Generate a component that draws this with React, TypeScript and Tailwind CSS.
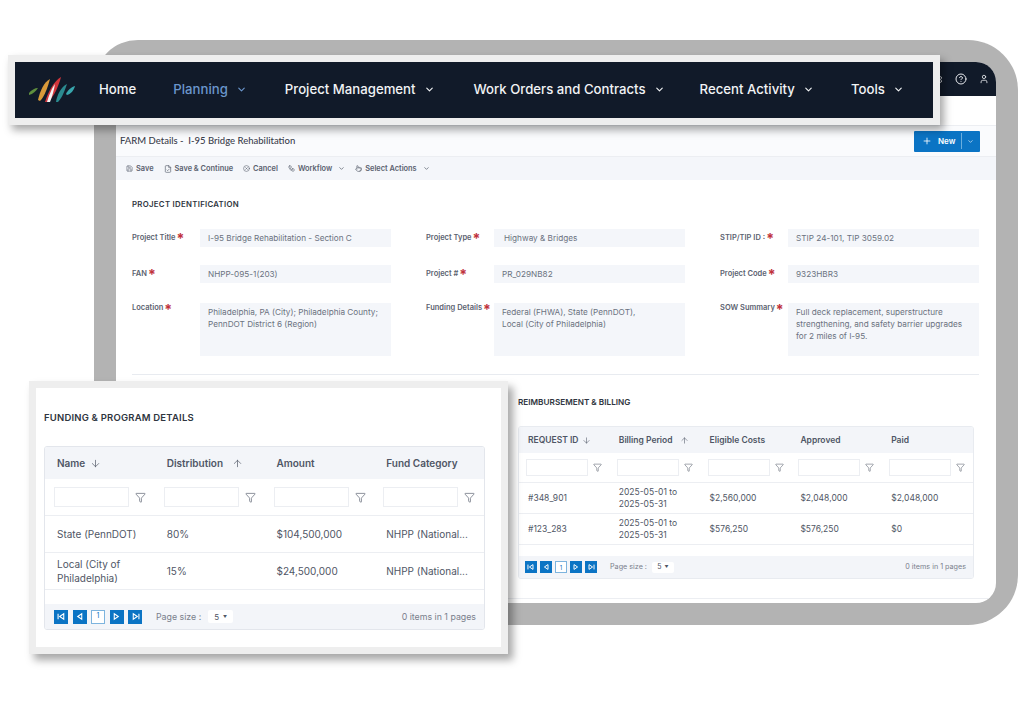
import { ArrowDown, ArrowUp, ChevronDown, CircleHelp, CircleX, FileCheck, Filter, Plus, Pointer, Save, Settings, User, Workflow } from "lucide-react"

const navItems = [
    { label: "Home", active: false, caret: false, gap: "mr-[37px]" },
    { label: "Planning", active: true, caret: true, gap: "mr-[38px]" },
    { label: "Project Management", active: false, caret: true, gap: "mr-[39px]" },
    { label: "Work Orders and Contracts", active: false, caret: true, gap: "mr-[35px]" },
    { label: "Recent Activity", active: false, caret: true, gap: "mr-[37px]" },
    { label: "Tools", active: false, caret: true, gap: "" },
]

const Logo = () => (
    <svg width="48" height="28" viewBox="0 0 48 28" className="shrink-0">
        <path d="M1 17 C3 14 7 12 10 12 C8 15 5 18 1 19 Z" fill="#5f8f3e" />
        <path d="M10 24 C12 15 16 6 22 3 C20 10 17 20 12 25 Z" fill="#d99a3a" />
        <path d="M17 26 C20 16 26 5 33 1 C31 9 26 21 20 26 Z" fill="#d2353c" />
        <path d="M19 26 C21 19 24 12 27 8 C26 14 24 21 22 26 Z" fill="#f4f4f4" />
        <path d="M28 26 C29 19 33 11 39 8 C37 14 34 22 30 26 Z" fill="#2b8a8f" />
        <path d="M38 18 C39 15 43 11 47 10 C46 14 43 18 39 19 Z" fill="#38a6ad" />
    </svg>
)

const NavBar = () => (
    <div className="absolute left-[8px] top-[55px] z-20 w-[932px] h-[70px] border-[7px] border-[#eeeeee] bg-[#111a29] shadow-[4px_5px_8px_rgba(0,0,0,0.35)] flex items-center pl-[13px]">
        <div className="mr-[23px]"><Logo /></div>
        {navItems.map((item) => (
            <div key={item.label} className={`flex items-center whitespace-nowrap text-[13.2px] font-medium ${item.gap} ${item.active ? "text-[#6b96cc]" : "text-[#f1f3f5]"}`}>
                <span>{item.label}</span>
                {item.caret && <ChevronDown size={11} strokeWidth={2.5} className="ml-[8px]" />}
            </div>
        ))}
    </div>
)

const ToolButton = ({ icon, label, caret }: { icon: React.ReactNode; label: string; caret?: boolean }) => (
    <div className="flex items-center gap-[3px] text-[7.4px] font-semibold text-[#5b6270] whitespace-nowrap">
        {icon}
        <span>{label}</span>
        {caret && <ChevronDown size={7} strokeWidth={2.5} className="ml-[3px]" />}
    </div>
)

const Label = ({ text, tall }: { text: string; tall?: boolean }) => (
    <div className={`w-[68px] shrink-0 flex items-center gap-[1px] text-[7.5px] font-semibold text-[#5b6270] whitespace-nowrap ${tall ? "h-[10px]" : "h-[17px]"}`}>
        {text}
        <span className="text-[#c0323c] text-[14px] leading-none font-bold mt-[3px]">*</span>
    </div>
)

const Field = ({ label, lines, tall, inset }: { label: string; lines: string[]; tall?: boolean; inset?: boolean }) => (
    <div className="flex items-start">
        <Label text={label} tall={tall} />
        <div className={`w-[191px] bg-[#f4f6fa] text-[8.2px] text-[#6b7280] leading-[12px] ${inset ? "pl-[10px]" : "pl-[8px]"} ${tall ? "h-[53px] py-[3px]" : "h-[18px] py-[3px]"}`}>
            {lines.map((line) => (
                <div key={line} className="whitespace-nowrap">{line}</div>
            ))}
        </div>
    </div>
)

const TriIcon = ({ kind, size }: { kind: "first" | "prev" | "next" | "last"; size: number }) => {
    const left = kind === "first" || kind === "prev"
    return (
        <svg width={size} height={size} viewBox="0 0 10 10" fill="none" stroke="white" strokeWidth="1.2">
            <path d={left ? "M7.5 2 L3 5 L7.5 8 Z" : "M2.5 2 L7 5 L2.5 8 Z"} />
            {kind === "first" && <path d="M1.2 2 V8" />}
            {kind === "last" && <path d="M8.8 2 V8" />}
        </svg>
    )
}

const Pager = ({ big }: { big?: boolean }) => {
    const box = big ? "size-[14px]" : "size-[12px]"
    const gap = big ? "gap-[4.5px]" : "gap-[3px]"
    const icon = big ? 9 : 8
    return (
        <div className={`flex items-center ${gap}`}>
            <div className={`${box} bg-[#0b74c4] flex items-center justify-center`}><TriIcon kind="first" size={icon} /></div>
            <div className={`${box} bg-[#0b74c4] flex items-center justify-center`}><TriIcon kind="prev" size={icon} /></div>
            <div className={`${box} border border-[#7db4de] bg-white text-[#0b74c4] flex items-center justify-center ${big ? "text-[7px]" : "text-[6px]"}`}>1</div>
            <div className={`${box} bg-[#0b74c4] flex items-center justify-center`}><TriIcon kind="next" size={icon} /></div>
            <div className={`${box} bg-[#0b74c4] flex items-center justify-center`}><TriIcon kind="last" size={icon} /></div>
        </div>
    )
}

const SortIcon = ({ dir, size, gap }: { dir?: "up" | "down"; size: number; gap: string }) => {
    if (dir === "down") return <ArrowDown size={size} strokeWidth={1.5} className={gap} />
    if (dir === "up") return <ArrowUp size={size} strokeWidth={1.5} className={gap} />
    return null
}

type Col = { name: string; sort?: "up" | "down"; sortGap: string }

const BillingTable = () => {
    const cols: Col[] = [
        { name: "REQUEST ID", sort: "down", sortGap: "ml-[4px]" },
        { name: "Billing Period", sort: "up", sortGap: "ml-[7px]" },
        { name: "Eligible Costs", sortGap: "" },
        { name: "Approved", sortGap: "" },
        { name: "Paid", sortGap: "" },
    ]
    const rows = [
        ["#348_901", "2025-05-01 to\n2025-05-31", "$2,560,000", "$2,048,000", "$2,048,000"],
        ["#123_283", "2025-05-01 to\n2025-05-31", "$576,250", "$576,250", "$0"],
    ]
    return (
        <div className="w-[456px] ml-[402px] border border-[#e8ebf0] rounded-[3px] overflow-hidden">
            <div className="grid grid-cols-5 h-[26px] bg-[#f3f5f9] items-center">
                {cols.map((c) => (
                    <div key={c.name} className="pl-[9px] flex items-center text-[8.5px] font-semibold text-[#4f5665]">
                        {c.name}
                        <SortIcon dir={c.sort} size={9} gap={c.sortGap} />
                    </div>
                ))}
            </div>
            <div className="grid grid-cols-5 h-[30px] items-center border-b border-[#eceef2]">
                {cols.map((c) => (
                    <div key={c.name} className="pl-[7px] flex items-center gap-[4px]">
                        <div className="w-[62px] h-[17px] border border-[#eceef2] bg-white" />
                        <Filter size={9} strokeWidth={1.5} className="text-[#5b6270] ml-[1px]" />
                    </div>
                ))}
            </div>
            {rows.map((row) => (
                <div key={row[0]} className="grid grid-cols-5 h-[31px] items-center border-b border-[#eceef2]">
                    {row.map((cell, i) => (
                        <div key={i} className="pl-[9px] text-[8.5px] leading-[12px] text-[#4f5665] whitespace-pre-line">{cell}</div>
                    ))}
                </div>
            ))}
            <div className="h-[11px]" />
            <div className="h-[22px] bg-[#f3f5f9] flex items-center pl-[6px] pr-[7px]">
                <Pager />
                <span className="ml-[13px] text-[7.2px] text-[#7a808c]">Page size :</span>
                <div className="ml-[5px] h-[11px] w-[22px] bg-white rounded-[2px] flex items-center justify-center gap-[3px] text-[7px] text-[#4f5665]">
                    5 <span className="text-[4px]">▼</span>
                </div>
                <span className="ml-auto text-[7.2px] text-[#7a808c]">0 items in 1 pages</span>
            </div>
        </div>
    )
}

const FundingCard = () => {
    const cols: Col[] = [
        { name: "Name", sort: "down", sortGap: "ml-[5px]" },
        { name: "Distribution", sort: "up", sortGap: "ml-[9px]" },
        { name: "Amount", sortGap: "" },
        { name: "Fund Category", sortGap: "" },
    ]
    const rows = [
        ["State (PennDOT)", "80%", "$104,500,000", "NHPP (National..."],
        ["Local (City of\nPhiladelphia)", "15%", "$24,500,000", "NHPP (National..."],
    ]
    return (
        <div className="absolute left-[29px] top-[381px] z-10 w-[479px] h-[273px] border-[7px] border-[#eeeeee] bg-white shadow-[5px_6px_8px_rgba(0,0,0,0.35)] pl-[8px] pt-[23px]">
            <h2 className="text-[9.5px] leading-[14px] font-semibold tracking-[0.2px] text-[#2f3540]">FUNDING &amp; PROGRAM DETAILS</h2>
            <div className="mt-[21px] w-[441px] border border-[#e3e6ec] rounded-[3px] overflow-hidden">
                <div className="grid grid-cols-4 h-[32px] bg-[#f3f5f9] items-center">
                    {cols.map((c) => (
                        <div key={c.name} className="pl-[12px] flex items-center text-[10px] font-semibold text-[#4f5665]">
                            {c.name}
                            <SortIcon dir={c.sort} size={11} gap={c.sortGap} />
                        </div>
                    ))}
                </div>
                <div className="grid grid-cols-4 h-[37px] items-center border-b border-[#eceef2]">
                    {cols.map((c) => (
                        <div key={c.name} className="pl-[9px] flex items-center gap-[6px]">
                            <div className="w-[75px] h-[20px] border border-[#eceef2] bg-white" />
                            <Filter size={11} strokeWidth={1.5} className="text-[#5b6270]" />
                        </div>
                    ))}
                </div>
                {rows.map((row) => (
                    <div key={row[0]} className="grid grid-cols-4 h-[37px] items-center border-b border-[#eceef2]">
                        {row.map((cell, i) => (
                            <div key={i} className="pl-[12px] text-[10px] leading-[14px] text-[#4f5665] whitespace-pre-line">{cell}</div>
                        ))}
                    </div>
                ))}
                <div className="h-[14px]" />
                <div className="h-[25px] bg-[#f3f5f9] flex items-center pl-[9px] pr-[8px]">
                    <Pager big />
                    <span className="ml-[14px] text-[8.8px] text-[#7a808c]">Page size :</span>
                    <div className="ml-[7px] h-[13px] w-[25px] bg-white rounded-[2px] flex items-center justify-center gap-[4px] text-[8px] text-[#4f5665]">
                        5 <span className="text-[4px]">▼</span>
                    </div>
                    <span className="ml-auto text-[8.8px] text-[#7a808c]">0 items in 1 pages</span>
                </div>
            </div>
        </div>
    )
}

export default function App() {
    return (
        <div className="relative w-[1024px] h-[709px] overflow-hidden bg-white font-['Inter',sans-serif]">
            <NavBar />
            <FundingCard />

            <div className="absolute left-[94px] top-[40px] w-[924px] h-[585px] bg-[#b3b3b3] rounded-tl-[44px] rounded-r-[50px] rounded-bl-[24px] p-[22px]">
                <div className="w-[880px] h-[541px] bg-white rounded-tr-[20px] rounded-br-[20px] overflow-hidden">
                    <div className="h-[34px] bg-[#111a29] flex items-center justify-end gap-[12px] pr-[7px] text-[#e8eaee]">
                        <Settings size={11} />
                        <CircleHelp size={12} />
                        <User size={10} />
                    </div>
                    <div className="h-[29px]" />
                    <div className="h-[32px] bg-[#fafbfd] border-y border-[#eceef2] flex items-center justify-between pl-[4px] pr-[16px]">
                        <span className="font-['Lato',sans-serif] text-[9.5px] font-medium text-[#3a404c]">FARM Details -&nbsp; I-95 Bridge Rehabilitation</span>
                        <div className="w-[66px] h-[21px] bg-[#0b74c4] rounded-[1px] flex items-center text-white">
                            <Plus size={10} className="ml-[8px]" />
                            <span className="ml-[6px] text-[8px] font-semibold">New</span>
                            <div className="ml-[6px] h-[16px] w-px bg-[#6aaede]" />
                            <ChevronDown size={7} className="ml-[5px]" />
                        </div>
                    </div>
                    <div className="h-[23px] bg-[#f4f6fa] flex items-center gap-[10px] pl-[10px] pt-[1px]">
                        <ToolButton icon={<Save size={7} />} label="Save" />
                        <ToolButton icon={<FileCheck size={8} />} label="Save & Continue" />
                        <ToolButton icon={<CircleX size={7} />} label="Cancel" />
                        <ToolButton icon={<Workflow size={7} />} label="Workflow" caret />
                        <ToolButton icon={<Pointer size={7} />} label="Select Actions" caret />
                    </div>

                    <div className="px-[16px]">
                        <h2 className="mt-[19px] text-[7.8px] leading-[10px] font-semibold tracking-[0.3px] text-[#2f3540]">PROJECT IDENTIFICATION</h2>
                        <div className="mt-[20px] grid grid-cols-[259px_259px_259px] gap-x-[35px]">
                            <Field label="Project Title" lines={["I-95 Bridge Rehabilitation - Section C"]} />
                            <Field inset label="Project Type" lines={["Highway & Bridges"]} />
                            <Field label="STIP/TIP ID :" lines={["STIP 24-101, TIP 3059.02"]} />
                        </div>
                        <div className="mt-[18px] grid grid-cols-[259px_259px_259px] gap-x-[35px]">
                            <Field label="FAN" lines={["NHPP-095-1(203)"]} />
                            <Field label="Project #" lines={["PR_029NB82"]} />
                            <Field label="Project Code" lines={["9323HBR3"]} />
                        </div>
                        <div className="mt-[20px] grid grid-cols-[259px_259px_259px] gap-x-[35px]">
                            <Field tall label="Location" lines={["Philadelphia, PA (City); Philadelphia County;", "PennDOT District 6 (Region)"]} />
                            <Field tall label="Funding Details" lines={["Federal (FHWA), State (PennDOT),", "Local (City of Philadelphia)"]} />
                            <Field tall label="SOW Summary" lines={["Full deck replacement, superstructure", "strengthening, and safety barrier upgrades", "for 2 miles of I-95."]} />
                        </div>
                        <div className="mt-[18px] h-px w-[847px] bg-[#e8ebf0]" />
                    </div>

                    <h2 className="mt-[22px] ml-[402px] text-[8.2px] leading-[10px] font-semibold text-[#2f3540]">REIMBURSEMENT &amp; BILLING</h2>
                    <div className="mt-[19px]">
                        <BillingTable />
                    </div>
                    <div className="mt-[19px] h-px bg-[#eceef2]" />
                </div>
            </div>
        </div>
    )
}
